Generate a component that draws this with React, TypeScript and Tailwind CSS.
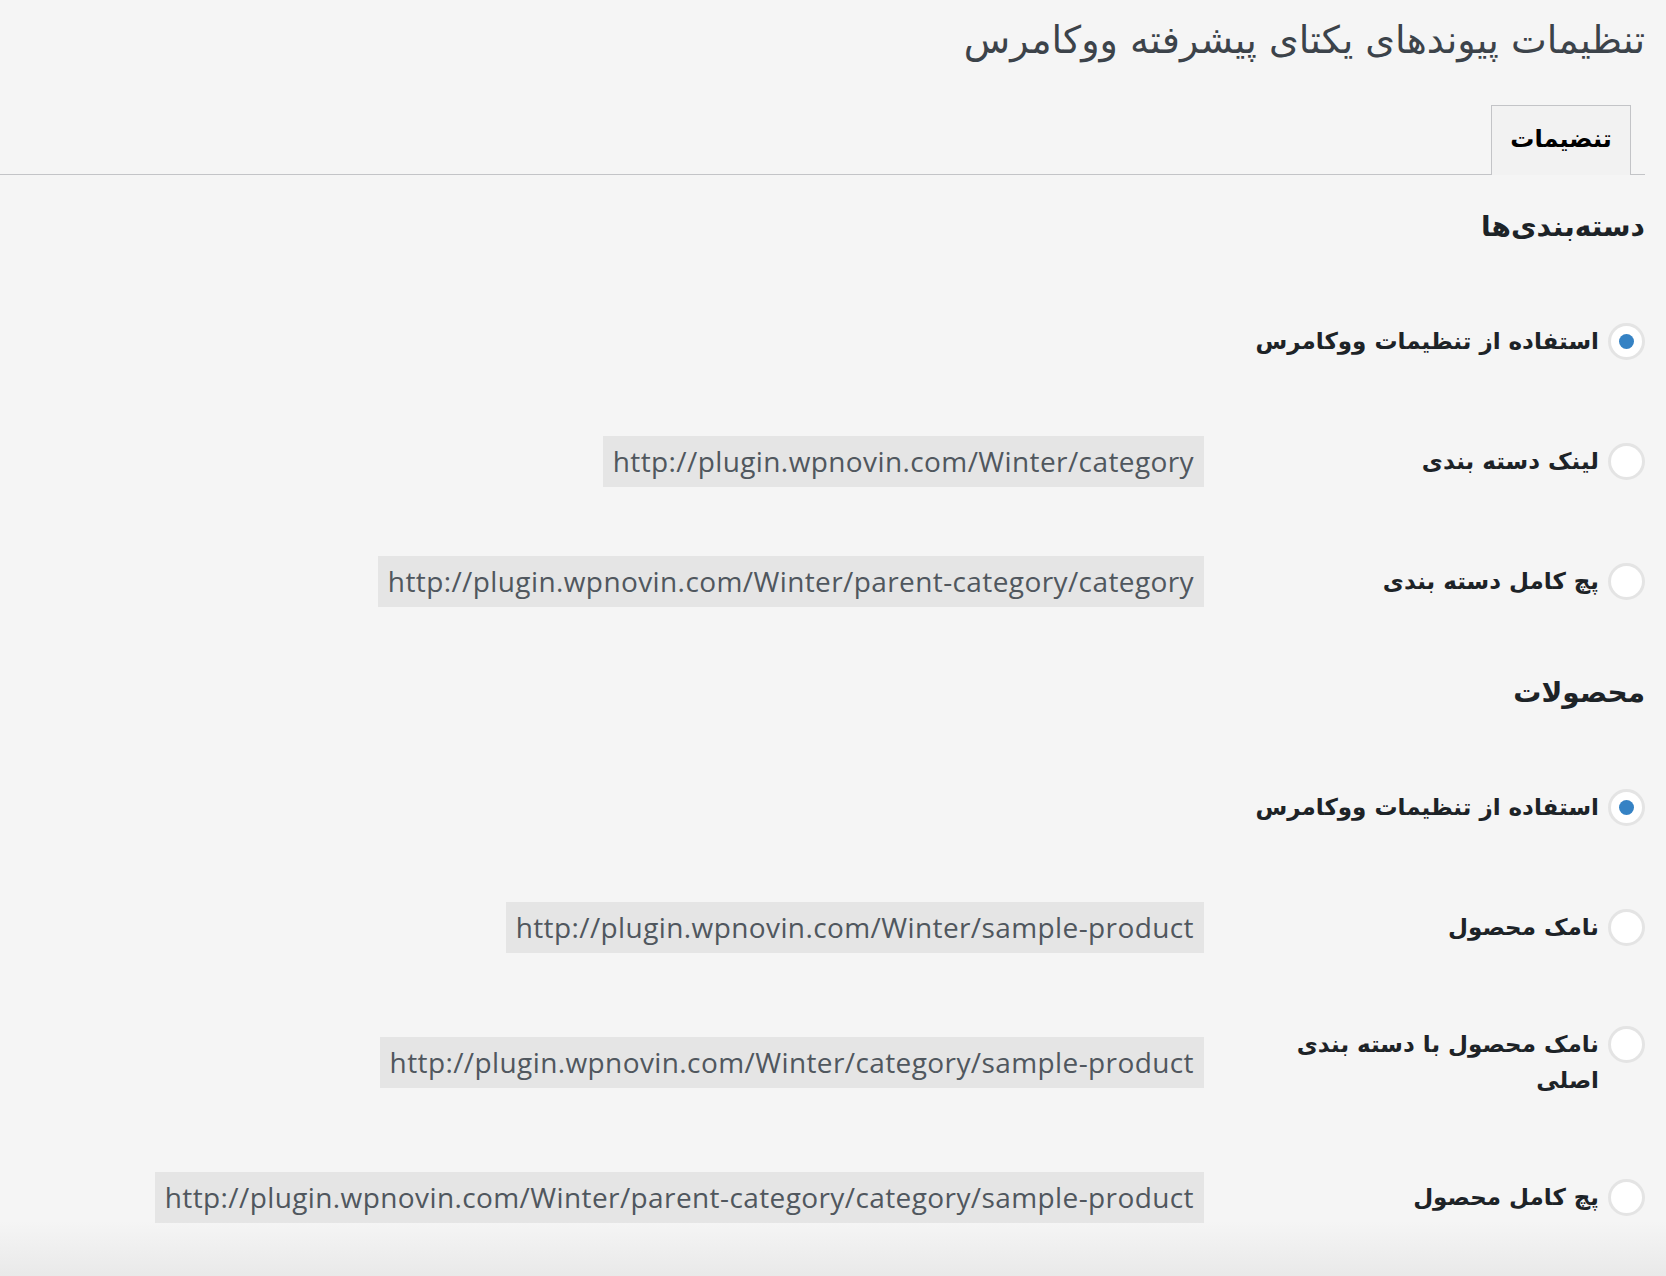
import React from "react";

const fa = { fontFamily: '"DejaVu Sans", sans-serif' };
const mono = { fontFamily: '"Open Sans", sans-serif' };

type Row = { label: string; url?: string; checked?: boolean; tall?: boolean };

const categoryRows: Row[] = [
  { label: "استفاده از تنظیمات ووکامرس", checked: true },
  { label: "لینک دسته بندی", url: "http://plugin.wpnovin.com/Winter/category" },
  { label: "پچ کامل دسته بندی", url: "http://plugin.wpnovin.com/Winter/parent-category/category" },
];

const productRows: Row[] = [
  { label: "استفاده از تنظیمات ووکامرس", checked: true },
  { label: "نامک محصول", url: "http://plugin.wpnovin.com/Winter/sample-product" },
  { label: "نامک محصول با دسته بندی اصلی", url: "http://plugin.wpnovin.com/Winter/category/sample-product", tall: true },
  { label: "پچ کامل محصول", url: "http://plugin.wpnovin.com/Winter/parent-category/category/sample-product" },
];

function Radio({ checked }: { checked?: boolean }) {
  return (
    <span className="flex h-[37px] w-[37px] shrink-0 items-center justify-center rounded-full border-[3px] border-[#e4e4e4] bg-white">
      {checked && <span className="h-[15px] w-[15px] rounded-full bg-[#3582c4]" />}
    </span>
  );
}

function OptionRow({ row }: { row: Row }) {
  return (
    <div className={`flex items-center ${row.tall ? "h-[150px]" : "h-[120px]"}`}>
      <label className="flex w-[394px] shrink-0 items-start gap-[9px]">
        <Radio checked={row.checked} />
        <span className="w-[348px] text-[23px] font-bold leading-[36px] text-[#1d2327]" style={fa}>
          {row.label}
        </span>
      </label>
      <div className="mr-[47px] flex">
        {row.url && (
          <code
            dir="ltr"
            className="flex h-[51px] items-center whitespace-nowrap bg-[#e5e5e5] px-[10px] text-[28px] tracking-[0.4px] text-[#50575e]"
            style={mono}
          >
            {row.url}
          </code>
        )}
      </div>
    </div>
  );
}

function Section({ title, rows }: { title: string; rows: Row[] }) {
  return (
    <section>
      <h2 className="flex h-[106px] items-center pb-[2px] text-[28px] font-bold text-[#1d2327]" style={fa}>
        {title}
      </h2>
      {rows.map((r, i) => (
        <OptionRow key={i} row={r} />
      ))}
    </section>
  );
}

export default function App() {
  return (
    <div dir="rtl" className="relative min-h-screen overflow-hidden bg-[#f5f5f5]" style={fa}>
      <div className="mr-[21px]">
        <h1 className="flex h-[80px] items-center text-[38px] font-normal text-[#3c434a]">
          تنظیمات پیوندهای یکتای پیشرفته ووکامرس
        </h1>
        <nav className="mt-[25px] flex border-b border-[#c3c4c7] pr-[14px]">
          <a className="-mb-px flex h-[70px] w-[140px] items-center justify-center border border-b-0 border-[#c3c4c7] bg-[#f2f2f2] pb-[4px] text-[24px] font-bold text-black">
            تنضیمات
          </a>
        </nav>
        <Section title="دسته‌بندی‌ها" rows={categoryRows} />
        <Section title="محصولات" rows={productRows} />
      </div>
      <div className="pointer-events-none absolute inset-x-0 bottom-0 h-[55px] bg-gradient-to-b from-transparent to-[#e9e9e9]" />
    </div>
  );
}
